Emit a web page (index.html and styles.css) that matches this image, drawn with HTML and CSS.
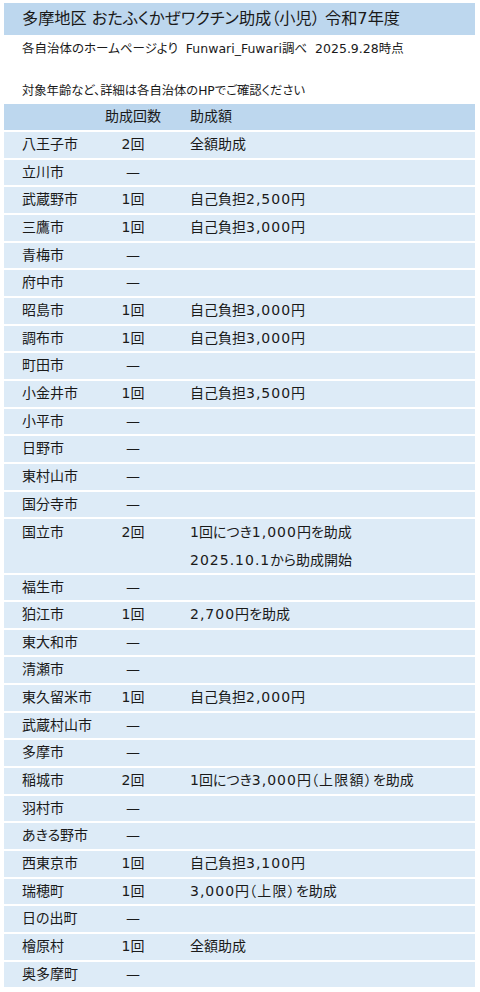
FILE: index.html
```html
<!DOCTYPE html>
<html lang="ja">
<head>
<meta charset="utf-8">
<title>多摩地区 おたふくかぜワクチン助成（小児） 令和7年度</title>
<link rel="stylesheet" href="styles.css">
</head>
<body>
<div class="sheet">
  <h1 class="title">多摩地区 おたふくかぜワクチン助成（小児） 令和7年度</h1>
  <p class="meta meta-src">各自治体のホームページより&nbsp;&nbsp;<span class="lat">Funwari_Fuwari</span>調べ&nbsp;&nbsp;<span class="lat">2025.9.28</span>時点</p>
  <p class="meta meta-note">対象年齢など、詳細は各自治体のHPでご確認ください</p>
  <div class="table">
    <div class="row head"><div class="c1"></div><div class="c2">助成回数</div><div class="c3">助成額</div></div>
    <div class="row"><div class="c1">八王子市</div><div class="c2">2回</div><div class="c3">全額助成</div></div>
    <div class="row"><div class="c1">立川市</div><div class="c2">—</div><div class="c3"></div></div>
    <div class="row"><div class="c1">武蔵野市</div><div class="c2">1回</div><div class="c3">自己負担<span class="num">2,500</span>円</div></div>
    <div class="row"><div class="c1">三鷹市</div><div class="c2">1回</div><div class="c3">自己負担<span class="num">3,000</span>円</div></div>
    <div class="row"><div class="c1">青梅市</div><div class="c2">—</div><div class="c3"></div></div>
    <div class="row"><div class="c1">府中市</div><div class="c2">—</div><div class="c3"></div></div>
    <div class="row"><div class="c1">昭島市</div><div class="c2">1回</div><div class="c3">自己負担<span class="num">3,000</span>円</div></div>
    <div class="row"><div class="c1">調布市</div><div class="c2">1回</div><div class="c3">自己負担<span class="num">3,000</span>円</div></div>
    <div class="row"><div class="c1">町田市</div><div class="c2">—</div><div class="c3"></div></div>
    <div class="row"><div class="c1">小金井市</div><div class="c2">1回</div><div class="c3">自己負担<span class="num">3,500</span>円</div></div>
    <div class="row"><div class="c1">小平市</div><div class="c2">—</div><div class="c3"></div></div>
    <div class="row"><div class="c1">日野市</div><div class="c2">—</div><div class="c3"></div></div>
    <div class="row"><div class="c1">東村山市</div><div class="c2">—</div><div class="c3"></div></div>
    <div class="row"><div class="c1">国分寺市</div><div class="c2">—</div><div class="c3"></div></div>
    <div class="row double"><div class="c1">国立市</div><div class="c2">2回</div><div class="c3"><div>1回につき<span class="num">1,000</span>円を助成</div><div><span class="num">2025.10.1</span>から助成開始</div></div></div>
    <div class="row"><div class="c1">福生市</div><div class="c2">—</div><div class="c3"></div></div>
    <div class="row"><div class="c1">狛江市</div><div class="c2">1回</div><div class="c3"><span class="num">2,700</span>円を助成</div></div>
    <div class="row"><div class="c1">東大和市</div><div class="c2">—</div><div class="c3"></div></div>
    <div class="row"><div class="c1">清瀬市</div><div class="c2">—</div><div class="c3"></div></div>
    <div class="row"><div class="c1">東久留米市</div><div class="c2">1回</div><div class="c3">自己負担<span class="num">2,000</span>円</div></div>
    <div class="row"><div class="c1">武蔵村山市</div><div class="c2">—</div><div class="c3"></div></div>
    <div class="row"><div class="c1">多摩市</div><div class="c2">—</div><div class="c3"></div></div>
    <div class="row"><div class="c1">稲城市</div><div class="c2">2回</div><div class="c3">1回につき<span class="num">3,000</span>円<span class="par">（上限額）</span>を助成</div></div>
    <div class="row"><div class="c1">羽村市</div><div class="c2">—</div><div class="c3"></div></div>
    <div class="row"><div class="c1">あきる野市</div><div class="c2">—</div><div class="c3"></div></div>
    <div class="row"><div class="c1">西東京市</div><div class="c2">1回</div><div class="c3">自己負担<span class="num">3,100</span>円</div></div>
    <div class="row"><div class="c1">瑞穂町</div><div class="c2">1回</div><div class="c3"><span class="num">3,000</span>円<span class="par">（上限）</span>を助成</div></div>
    <div class="row"><div class="c1">日の出町</div><div class="c2">—</div><div class="c3"></div></div>
    <div class="row"><div class="c1">檜原村</div><div class="c2">1回</div><div class="c3">全額助成</div></div>
    <div class="row"><div class="c1">奥多摩町</div><div class="c2">—</div><div class="c3"></div></div>
  </div>
</div>
</body>
</html>
```

FILE: styles.css
```css
html, body {
  margin: 0;
  padding: 0;
  background: #ffffff;
}

body {
  font-family: "DejaVu Sans", "Noto Sans CJK JP", sans-serif;
  color: #1a1a1a;
  font-feature-settings: "palt";
}

.sheet {
  margin: 3px 5px 0 4px;
}

.title {
  margin: 0;
  height: 32px;
  line-height: 32px;
  padding-left: 18px;
  background: #bdd7ee;
  font-size: 16.2px;
  font-weight: 400;
  white-space: nowrap;
}

.meta {
  margin: 0;
  padding-left: 18px;
  font-size: 12.5px;
  white-space: nowrap;
}

.meta-src {
  height: 28px;
  line-height: 28px;
}

.meta-note {
  margin-top: 15px;
  height: 26px;
  line-height: 26px;
  font-size: 12.3px;
}

.lat {
  letter-spacing: 0;
}

.table {
  display: flex;
  flex-direction: column;
  gap: 2px;
  font-size: 14px;
}

.row {
  display: grid;
  grid-template-columns: 101px 56px 1fr;
  align-items: center;
  height: 25.67px;
  line-height: 25.67px;
  background: #ddebf7;
}

.row.head {
  height: 26px;
  background: #bdd7ee;
}

.row.double {
  height: 53.33px;
  align-items: start;
}

.row.double .c3 div {
  line-height: 27.5px;
}

.row.double .c1,
.row.double .c2 {
  line-height: 27px;
}

.c1 {
  padding-left: 18px;
  white-space: nowrap;
}

.c2 {
  text-align: center;
  white-space: nowrap;
}

.c3 {
  padding-left: 29px;
  white-space: nowrap;
}

.num {
  letter-spacing: 1px;
}

.par {
  letter-spacing: 1.2px;
}
```
